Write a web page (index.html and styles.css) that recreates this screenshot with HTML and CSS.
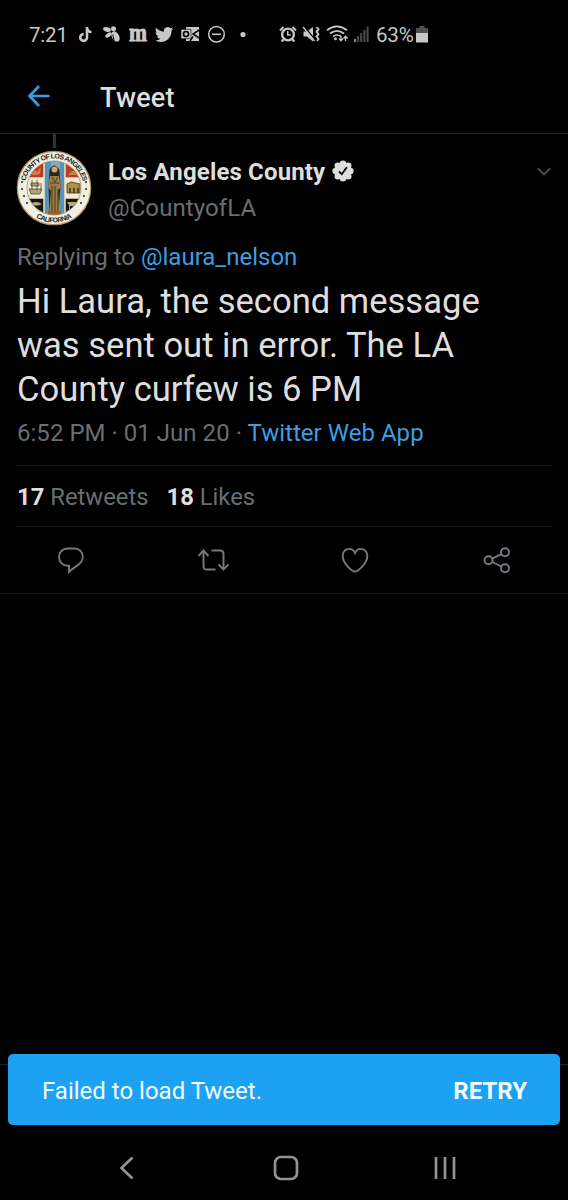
FILE: index.html
```html
<!DOCTYPE html>
<html lang="en">
<head>
<meta charset="utf-8">
<title>Tweet</title>
<link rel="stylesheet" href="styles.css">
</head>
<body>
<div class="screen">
  <div class="status">
    <span class="clock">7:21</span>
    <svg class="notifications" width="170" height="36" viewBox="78 17 170 36">
      <path d="M87 27v10.500a3.400 3.400 0 1 1-3.400-3.400M87 28c.5 2.500 2 4 4.500 4" fill="none" stroke="#c8c8c8" stroke-width="2.600"/>
      <g fill="#c8c8c8">
        <ellipse cx="107" cy="29.500" rx="4" ry="2.200" transform="rotate(15 107 29.500)"/>
        <ellipse cx="108.500" cy="35" rx="3.600" ry="1.900" transform="rotate(-35 108.500 35)"/>
        <circle cx="113.500" cy="28.800" r="2.500"/>
        <ellipse cx="115.500" cy="36.500" rx="3.600" ry="5.600" transform="rotate(-30 115.500 36.500)"/>
      </g>
      <path d="m112.800 34.500 1.200 6" stroke="#000" stroke-width=".9"/>
      <text class="masthead" transform="translate(129 41) scale(1 1.220)" textLength="18" lengthAdjust="spacingAndGlyphs">m</text>
      <path transform="translate(154.900 25.300) scale(.77)" fill="#c8c8c8" d="M23.950 4.570a10 10 0 0 1-2.820.780 4.960 4.960 0 0 0 2.160-2.730c-.95.560-2 .960-3.130 1.190a4.920 4.920 0 0 0-8.380 4.480C7.690 8.100 4.070 6.130 1.640 3.160a4.820 4.820 0 0 0-.67 2.480c0 1.710.870 3.210 2.190 4.100a4.900 4.900 0 0 1-2.230-.62v.060a4.920 4.920 0 0 0 3.950 4.830 5 5 0 0 1-2.210.080 4.940 4.940 0 0 0 4.600 3.420A9.870 9.870 0 0 1 0 19.540a14 14 0 0 0 7.550 2.210c9.050 0 14-7.500 14-13.990 0-.21 0-.42-.02-.63a10 10 0 0 0 2.460-2.550z"/>
      <path d="M186 27h13v14h-13z" fill="#c8c8c8"/>
      <path d="m200 29.500-7 4.500 7 4.500M193 36.500l-3 4.500" stroke="#000" stroke-width="1.500" fill="none"/>
      <path d="M181 29.300h10v9.400h-10z" fill="#c8c8c8" stroke="#000" stroke-width=".6"/>
      <circle cx="186" cy="34" r="2.500" fill="none" stroke="#000" stroke-width="1.700"/>
      <circle cx="216.500" cy="34.300" r="7.800" fill="none" stroke="#c8c8c8" stroke-width="1.500"/>
      <path d="M212 34.300h9" stroke="#c8c8c8" stroke-width="1.600"/>
      <circle cx="243" cy="34.500" r="2.600" fill="#c8c8c8"/>
    </svg>
    <svg class="indicators" width="92" height="24" viewBox="278 23 92 24">
      <g fill="none" stroke="#c8c8c8">
        <circle cx="288" cy="34.500" r="5.900" stroke-width="2.300"/>
        <path d="M287.700 31v4h3" stroke-width="1.500"/>
        <path d="m280 30.500 3.500-3.500m12.500 3.500-3.500-3.500M283.500 39.500l-2 2m11-2 2 2" stroke-width="2"/>
        <path d="M316.500 27l2 2.400-2 2.400 2 2.400-2 2.400 2 2.400-1.500 2" stroke-width="1.800"/>
        <path d="M327 30.200q10-7.600 20 0M330 33.500q7-5.400 14 0M333 36.500q4-3 8 0" stroke-width="1.700"/>
        <path d="M341 36v4.500m-2-2 2 2.200 2-2.200M345.500 41v-4.500m-2 2 2-2.200 2 2.200" stroke-width="1.300"/>
      </g>
      <path d="M303.500 31.500h3.500l6-4.500v14.500l-6-5h-3.500z" fill="#c8c8c8"/>
      <path d="m304.500 26.500 11 14" stroke="#000" stroke-width="1.300"/>
      <path d="m303 27 11.500 14" stroke="#c8c8c8" stroke-width="1.300"/>
      <circle cx="335.500" cy="38.700" r="1.500" fill="#c8c8c8"/>
      <path d="M354 39h2v3h-2z" fill="#888"/>
      <path d="M357 36h2v6h-2zM360.200 33h2v9h-2zM363.400 30h2v12h-2zM366.600 26.500h2V42h-2z" fill="#4b4b4b"/>
    </svg>
    <span class="percent">63%</span>
    <svg class="battery" width="12" height="18" viewBox="0 0 12 18">
      <path d="M3.500 0h5v2H12v6H0V2h3.500z" fill="#505050"/>
      <path d="M0 7h12v9.500H0z" fill="#c8c8c8"/>
    </svg>
  </div>

  <header class="appbar">
    <svg width="24" height="24" viewBox="0 0 24 24" fill="none" stroke="#369fe4" stroke-width="2.600"><path d="M22.500 11H3M12 1 2.500 11l9.500 10"/></svg>
    <h1>Tweet</h1>
  </header>

  <article class="tweet">
    <div class="thread"></div>
    <div class="author">
      <svg class="avatar" width="76" height="76" viewBox="0 0 76 76">
        <defs>
          <clipPath id="disc"><circle cx="38" cy="38" r="27"/></clipPath>
          <path id="top-arc" d="M8.500 38a29.500 29.500 0 0 1 59 0"/>
          <path id="bottom-arc" d="M3.500 38a34.500 34.500 0 0 0 69 0"/>
        </defs>
        <circle cx="38" cy="38" r="36.700" fill="#f1eee2" stroke="#a99453" stroke-width="1.200"/>
        <g clip-path="url(#disc)">
          <path d="M10 10h56v56H10z" fill="#f0eadb"/>
          <path d="M10 10h19v18H10zM49 10h17v18H49z" fill="#b93a2b"/>
          <path d="M10 48h19v18H10zM49 48h17v18H49z" fill="#17150f"/>
          <path d="M28 10h21v56H28z" fill="#5a93b9"/>
          <path d="M35 10h9v56h-9z" fill="#83adc5"/>
          <path d="M10 28h18M10 48h18M49 28h18M49 48h18M28 10v56M49 10v56" stroke="#f3e6bd" stroke-width="1.500"/>
          <path d="M15 25l4-5 2 2 4-5-1 7-4 1zM52 25q6-8 10 0z" fill="#ce8242"/>
          <path d="M13 39h13l-2 5H15zM15 33h8v3h-8zM16 30v10m5-10v11m4-8v7" fill="#b4a27b" stroke="#5b4a2a" stroke-width=".8"/>
          <path d="M51 34l4-2 9 2v9H51z" fill="#ad9043" stroke="#604e21"/>
          <path d="M54 38v5m4-5v5m4-5v5" stroke="#352b16" stroke-width="1.400"/>
          <path d="M14 54q6-4 12 0-6 3-12 0M51 52h11l1 3-2 1v4h-1v-4h-6v4h-1v-5z" fill="#bca777"/>
          <path d="M33.500 20q4.500-9 10 0l1 16-2 29h-9l-1-29z" fill="#30271b"/>
          <path d="M34 26h9l2 11-3 4 2 24H33l2-24-3-4z" fill="#9a7f45"/>
          <circle cx="38.500" cy="19.500" r="3" fill="#d0aa72"/>
          <path d="M36 27l3 5 3-5M36 36v27m3-27v27m3-24v23M34 33h9" stroke="#4e3818" fill="none"/>
          <path d="M32 61h13v5H32z" fill="#a35c25"/>
        </g>
        <circle cx="38" cy="38" r="27" fill="none" stroke="#a69662" stroke-width=".8"/>
        <text class="seal"><textPath href="#top-arc" startOffset="7" textLength="79">COUNTY OF LOS ANGELES</textPath></text>
        <text class="seal"><textPath href="#bottom-arc" startOffset="35.200" textLength="38">CALIFORNIA</textPath></text>
        <path d="M5 32h2M5 39h2M7 46h2M10 53h2M69 32h2M69 39h2M67 46h2M64 53h2" stroke="#57564e" stroke-width="2"/>
      </svg>
      <div class="names">
        <div class="name"><span class="fullname">Los Angeles County</span>
          <svg class="verified" width="22" height="22" viewBox="0 0 22 22">
            <g fill="#dedede"><circle cx="11" cy="11" r="8.500"/><circle cx="11" cy="3.700" r="3.300"/><circle cx="16.200" cy="5.800" r="3.300"/><circle cx="18.300" cy="11" r="3.300"/><circle cx="16.200" cy="16.200" r="3.300"/><circle cx="11" cy="18.300" r="3.300"/><circle cx="5.800" cy="16.200" r="3.300"/><circle cx="3.700" cy="11" r="3.300"/><circle cx="5.800" cy="5.800" r="3.300"/></g>
            <path d="m7 11.500 2.800 2.700 5-7" fill="none" stroke="#000" stroke-width="1.800"/>
          </svg>
        </div>
        <div class="handle">@CountyofLA</div>
      </div>
      <svg class="caret" width="16" height="10" viewBox="0 0 16 10"><path d="m2 1.500 6 6 6-6" fill="none" stroke="#4c5155" stroke-width="1.800"/></svg>
    </div>
    <p class="reply">Replying to <a>@laura_nelson</a></p>
    <p class="message">Hi Laura, the second message<br>was sent out in error. The LA<br>County curfew is 6 PM</p>
    <p class="meta">6:52 PM · 01 Jun 20 · <a>Twitter Web App</a></p>
    <div class="counts"><span><b>17</b> Retweets</span><span><b>18</b> Likes</span></div>
    <div class="actions">
      <svg width="32" height="32" viewBox="0 0 32 32"><path d="M12.500 4.500h7c5 0 8.300 3.700 8.300 8.300 0 7.700-9.300 9.800-13.800 15.200v-6.200h-1.500c-5 0-8.500-4.200-8.500-8.800 0-5 3.500-8.500 8.500-8.500z"/></svg>
      <svg width="32" height="32" viewBox="0 0 32 32"><path d="M1.500 12 6.500 6.500l5 5.500M6.500 7v15q0 3.500 3.500 3.500h8.500M14.500 6.500H23q3.500 0 3.500 3.500v15M21.500 20.500l5 5 5-5"/></svg>
      <svg width="32" height="32" viewBox="0 0 32 32"><path d="M16 27.700C12.500 26.800 3.700 19.300 3.700 12.300 3.700 4.200 13 2.300 16 9c3-6.700 12.300-4.800 12.300 3.300 0 7-8.800 14.500-12.300 15.400z"/></svg>
      <svg width="32" height="32" viewBox="0 0 32 32"><circle cx="7.500" cy="16.300" r="4"/><circle cx="24" cy="8.300" r="4"/><circle cx="24" cy="24.300" r="4"/><path d="m11.200 14.600 9.200-4.500M11.200 18l9.200 4.500"/></svg>
    </div>
  </article>

  <footer class="bottom">
    <div class="snackbar"><span class="notice">Failed to load Tweet.</span><b class="retry">RETRY</b></div>
  </footer>
  <nav class="nav">
    <svg width="16" height="24" viewBox="0 0 16 24"><path d="M13.500 1.500 2.500 12l11 10.500"/></svg>
    <svg class="home" width="26" height="26" viewBox="0 0 26 26"><rect x="2" y="2" width="22" height="22" rx="6"/></svg>
    <svg width="24" height="24" viewBox="0 0 24 24"><path d="M3 1v22M12 1v22M21 1v22"/></svg>
  </nav>
</div>
</body>
</html>
```
FILE: styles.css
```css
* { box-sizing: border-box; }
body { margin: 0; background: #000; font-family: Roboto, sans-serif; }
svg { display: block; flex: none; }
p, h1 { margin: 0; font-weight: 400; }
a { color: #3b9fe2; }
.screen { width: 568px; height: 1200px; display: flex; flex-direction: column; overflow: hidden; white-space: nowrap; }
.status { height: 60px; padding: 10px 0 0 29px; display: flex; align-items: center; color: #c8c8c8; font-size: 20.500px; }
.clock { width: 49px; letter-spacing: -.2px; }
.notifications { overflow: visible; }
.indicators { margin: 0 6px 0 30px; }
.percent { width: 40px; letter-spacing: -.2px; }
.battery { margin-top: -1px; }
.masthead { font: 900 21px "Liberation Serif", serif; fill: #c8c8c8; stroke: #c8c8c8; stroke-width: .8px; }
.appbar { height: 74px; padding: 0 27px; display: flex; align-items: center; gap: 49px; border-bottom: 1px solid #202224; }
.appbar h1 { color: #dedede; font-size: 27px; font-weight: 500; letter-spacing: .2px; padding-top: 2px; }
.tweet { border-bottom: 1px solid #202224; height: 460px; padding: 0 16px; }
.thread { width: 3px; height: 14px; margin-left: 37px; background: #303336; }
.author { display: flex; height: 91px; padding-top: 2px; }
.seal { font: 700 7px "Liberation Sans", sans-serif; fill: #28251d; }
.names { margin-left: 16px; flex: 1; padding-top: 4px; }
.name { display: flex; align-items: center; gap: 7px; height: 36px; color: #dedede; font-size: 24px; font-weight: 700; }
.fullname { letter-spacing: .15px; }
.verified { margin-top: -3px; }
.handle { line-height: 36px; color: #696e73; font-size: 24px; letter-spacing: .1px; }
.caret { margin-top: 17px; }
.reply { padding-left: 1px; height: 41px; line-height: 36px; color: #696e73; font-size: 24px; }
.message { padding-left: 1px; font-size: 34.600px; line-height: 43.800px; color: #dedede; }
.meta { padding-left: 1px; height: 55px; padding-top: 4px; line-height: 36px; color: #696e73; font-size: 24px; letter-spacing: .03px; border-bottom: 1px solid #202224; }
.counts { display: flex; align-items: center; gap: 18px; height: 61px; padding: 2px 0 0 1px; color: #696e73; font-size: 23.800px; border-bottom: 1px solid #202224; }
.counts b { color: #dedede; }
.actions { display: flex; justify-content: space-between; padding: 17px 39px 0; }
.actions svg { fill: none; stroke: #747a80; stroke-width: 1.900; }
.bottom { margin-top: 460px; padding: 0 8px; height: 72px; background: linear-gradient(#202224, #202224) 0 10px / 100% 1px no-repeat; }
.snackbar { height: 71px; border-radius: 5px; background: #1da1f2; color: #f2fcff; display: flex; align-items: center; justify-content: space-between; padding: 2px 33px 0 34px; font-size: 24px; }
.nav { height: 74px; display: flex; align-items: center; justify-content: space-between; padding: 10px 111px 10px 119px; }
.nav svg { fill: none; stroke: #929292; stroke-width: 2.700; margin-top: 10px; }
.nav .home { margin-left: 3px; }
```
